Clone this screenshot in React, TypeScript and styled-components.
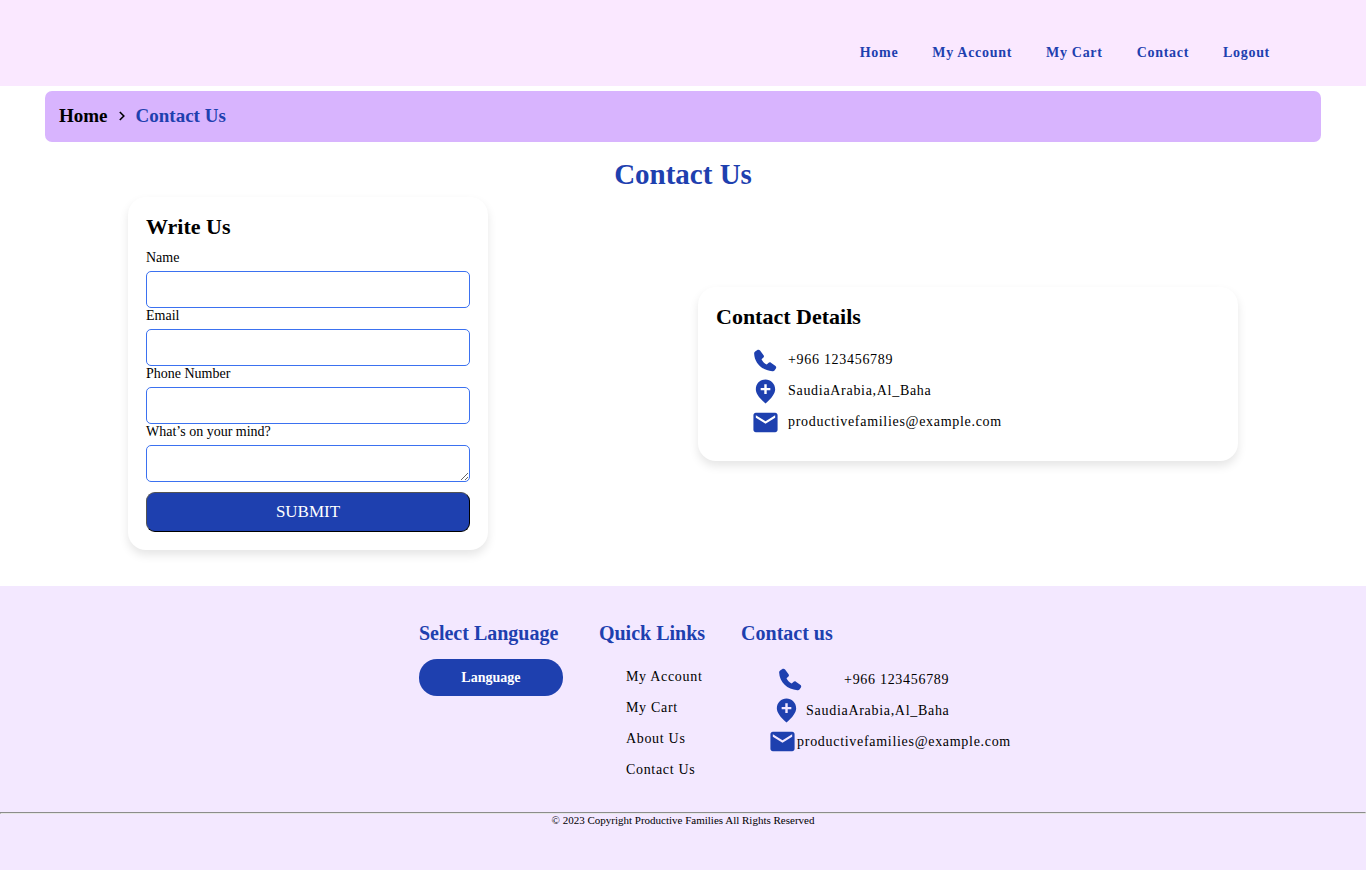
import React from "react";
import styled, { createGlobalStyle } from "styled-components";

const blue = "#1e40af";

const GlobalStyle = createGlobalStyle`
  *, *::before, *::after { box-sizing: border-box; margin: 0; padding: 0; }
  body {
    font-family: "Liberation Serif", "Times New Roman", serif;
    font-size: 14px;
    color: #000;
    background: #fff;
  }
  ul { list-style: none; }
  a { color: inherit; text-decoration: none; }
`;

const Page = styled.div`
  min-height: 100vh;
  display: flex;
  flex-direction: column;
`;

const Header = styled.header`
  background: #fae8ff;
  padding: 44px 96px 24px;
`;

const Nav = styled.nav`
  display: flex;
  justify-content: flex-end;
  gap: 34px;
`;

const NavLink = styled.a`
  color: ${blue};
  font-weight: bold;
  line-height: 18px;
  letter-spacing: 0.05em;
`;

const Breadcrumb = styled.nav`
  display: flex;
  align-items: center;
  gap: 8px;
  margin: 5px 45px 0;
  padding: 13px 14px 15px;
  background: #d8b4fe;
  border-radius: 7px;
  font-size: 19px;
  font-weight: bold;
  line-height: 23px;
`;

const Current = styled.span`
  color: ${blue};
`;

const Title = styled.h1`
  margin-top: 15px;
  text-align: center;
  color: ${blue};
  font-size: 29px;
  line-height: 34px;
`;

const Main = styled.main`
  display: grid;
  grid-template-columns: 360px 540px;
  justify-content: space-between;
  align-items: center;
  margin: 6px 128px 36px;
`;

const Card = styled.section`
  background: #fff;
  border-radius: 18px;
  padding: 18px;
  box-shadow: 0 5px 10px rgba(0, 0, 0, 0.1);
`;

const CardTitle = styled.h2`
  font-size: 22px;
  line-height: 23px;
`;

const Form = styled.form`
  display: flex;
  flex-direction: column;
  padding-top: 12px;
`;

const Label = styled.label`
  line-height: 16px;
  margin-bottom: 5px;
`;

const Field = styled.input`
  width: 100%;
  height: 37px;
  padding: 9px;
  border: 1px solid #3b71f0;
  border-radius: 5px;
  background: #fff;
  font: inherit;
`;

const Submit = styled.button`
  height: 40px;
  margin-top: 10px;
  border: 1px outset #000;
  border-radius: 9px;
  background: ${blue};
  color: #fff;
  font-family: inherit;
  font-size: 17px;
`;

const Details = styled.ul`
  padding: 17px 0 5px 35px;
`;

const Detail = styled.li`
  display: flex;
  align-items: center;
  gap: 8px;
  height: 31px;
  letter-spacing: 0.05em;
`;

const Footer = styled.footer`
  flex: 1;
  background: #f3e8ff;
`;

const FooterColumns = styled.div`
  display: flex;
  justify-content: center;
  gap: 36px;
  padding: 36px 0 27px;
`;

const FooterTitle = styled.h3`
  color: ${blue};
  font-size: 20px;
  line-height: 23px;
`;

const LanguageButton = styled.button`
  display: block;
  width: 144px;
  height: 37px;
  margin-top: 14px;
  border: 0;
  border-radius: 18px;
  background: ${blue};
  color: #fff;
  font: bold 14px "Liberation Serif", serif;
`;

const Links = styled.ul`
  padding: 16px 0 0 27px;
`;

const LinkItem = styled.li`
  line-height: 31px;
  letter-spacing: 0.05em;
`;

const ContactColumn = styled.div`
  width: 206px;
  white-space: nowrap;
`;

const FooterDetails = styled.ul`
  padding-top: 19px;
`;

const FooterDetail = styled.li<{ $indent: number; $gap: number }>`
  display: flex;
  align-items: center;
  height: 31px;
  padding-left: ${(p) => p.$indent}px;
  gap: ${(p) => p.$gap}px;
  letter-spacing: 0.05em;
`;

const Divider = styled.hr`
  border: 1px solid;
  border-color: #8c8c8c #e6e6e6 #e6e6e6 #8c8c8c;
`;

const Copyright = styled.p`
  text-align: center;
  font-size: 11px;
  line-height: 12px;
`;

const Svg = styled.svg`
  flex: none;
  width: 29px;
  height: 29px;
  fill: ${blue};
`;

const Chevron = styled.svg`
  width: 12px;
  height: 12px;
`;

const paths = {
  phone:
    "M2.6 6.3C2.6 5.4 3 4.9 3.7 4.4L5 3.5C5.9 3 6.9 3.1 7.5 3.8L10.4 7.6C10.9 8.3 10.8 9 10.3 9.5L8.7 11C9.4 12.8 11 14.4 13 15.4L14.6 13.9C15.1 13.4 15.8 13.3 16.5 13.8L20.3 16.6C21 17.2 21 18 20.6 18.7L19.6 20C19.1 20.6 18.5 20.8 17.7 20.8C9.5 20.5 2.9 14.5 2.6 6.3Z",
  place:
    "M12 2c-4.2 0-8 3.22-8 8.2 0 3.32 2.67 7.25 8 11.8 5.33-4.55 8-8.48 8-11.8C20 5.22 16.2 2 12 2zm4 9h-3v3h-2v-3H8V9h3V6h2v3h3v2z",
  mail:
    "M20 4H4c-1.1 0-1.99.9-1.99 2L2 18c0 1.1.9 2 2 2h16c1.1 0 2-.9 2-2V6c0-1.1-.9-2-2-2zm0 4l-8 5-8-5V6l8 5 8-5v2z",
};

type IconName = keyof typeof paths;

const Icon = ({ name }: { name: IconName }) => (
  <Svg viewBox="0 0 24 24" aria-hidden="true">
    <path d={paths[name]} />
  </Svg>
);

const contacts: { icon: IconName; text: string; indent: number; gap: number }[] = [
  { icon: "phone", text: "+966 123456789", indent: 35, gap: 39 },
  { icon: "place", text: "SaudiaArabia,Al_Baha", indent: 31, gap: 5 },
  { icon: "mail", text: "productivefamilies@example.com", indent: 27, gap: 0 },
];

export default function App() {
  return (
    <Page>
      <GlobalStyle />
      <Header>
        <Nav aria-label="Main">
          {["Home", "My Account", "My Cart", "Contact", "Logout"].map((item) => (
            <NavLink href="#" key={item}>{item}</NavLink>
          ))}
        </Nav>
      </Header>
      <Breadcrumb aria-label="Breadcrumb">
        <a href="#">Home</a>
        <Chevron viewBox="0 0 12 12" fill="none" stroke="#000" strokeWidth="1.6" aria-hidden="true">
          <path d="M3.8 2 7.8 6 3.8 10" />
        </Chevron>
        <Current>Contact Us</Current>
      </Breadcrumb>
      <Title>Contact Us</Title>
      <Main>
        <Card>
          <CardTitle>Write Us</CardTitle>
          <Form onSubmit={(e) => e.preventDefault()}>
            <Label htmlFor="name">Name</Label>
            <Field id="name" type="text" />
            <Label htmlFor="email">Email</Label>
            <Field id="email" type="email" />
            <Label htmlFor="phone">Phone Number</Label>
            <Field id="phone" type="tel" />
            <Label htmlFor="message">What’s on your mind?</Label>
            <Field as="textarea" id="message" />
            <Submit type="submit">SUBMIT</Submit>
          </Form>
        </Card>
        <Card>
          <CardTitle>Contact Details</CardTitle>
          <Details>
            {contacts.map((c) => (
              <Detail key={c.icon}>
                <Icon name={c.icon} />
                {c.text}
              </Detail>
            ))}
          </Details>
        </Card>
      </Main>
      <Footer>
        <FooterColumns>
          <div>
            <FooterTitle>Select Language</FooterTitle>
            <LanguageButton type="button">Language</LanguageButton>
          </div>
          <div>
            <FooterTitle>Quick Links</FooterTitle>
            <Links>
              {["My Account", "My Cart", "About Us", "Contact Us"].map((item) => (
                <LinkItem key={item}><a href="#">{item}</a></LinkItem>
              ))}
            </Links>
          </div>
          <ContactColumn>
            <FooterTitle>Contact us</FooterTitle>
            <FooterDetails>
              {contacts.map((c) => (
                <FooterDetail key={c.icon} $indent={c.indent} $gap={c.gap}>
                  <Icon name={c.icon} />
                  {c.text}
                </FooterDetail>
              ))}
            </FooterDetails>
          </ContactColumn>
        </FooterColumns>
        <Divider />
        <Copyright>© 2023 Copyright Productive Families All Rights Reserved</Copyright>
      </Footer>
    </Page>
  );
}
